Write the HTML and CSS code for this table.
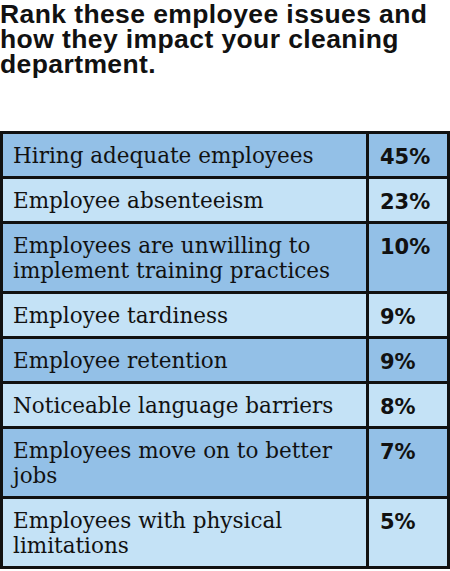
FILE: index.html
```html
<!DOCTYPE html>
<html lang="en">
<head>
    <meta charset="UTF-8">
    <title>Employee issues</title>
    <link rel="stylesheet" href="styles.css">
</head>
<body>

<div class="survey">
    <h1 class="title">Rank these employee issues and<br>how they impact your cleaning<br>department.</h1>

    <table class="results">
        <tr class="dark">
            <td class="issue">Hiring adequate employees</td>
            <td class="pct">45%</td>
        </tr>
        <tr class="light">
            <td class="issue">Employee absenteeism</td>
            <td class="pct">23%</td>
        </tr>
        <tr class="dark tall">
            <td class="issue">Employees are unwilling to<br>implement training practices</td>
            <td class="pct">10%</td>
        </tr>
        <tr class="light">
            <td class="issue">Employee tardiness</td>
            <td class="pct">9%</td>
        </tr>
        <tr class="dark">
            <td class="issue">Employee retention</td>
            <td class="pct">9%</td>
        </tr>
        <tr class="light">
            <td class="issue">Noticeable language barriers</td>
            <td class="pct">8%</td>
        </tr>
        <tr class="dark tall">
            <td class="issue">Employees move on to better<br>jobs</td>
            <td class="pct">7%</td>
        </tr>
        <tr class="light tall">
            <td class="issue">Employees with physical<br>limitations</td>
            <td class="pct">5%</td>
        </tr>
    </table>
</div>

</body>
</html>
```

FILE: styles.css
```css
body {
    margin: 0;
    background-color: #ffffff;
    color: #111;
}
.survey {
    width: 450px;
}
.title {
    font-family: "Liberation Sans", Arial, sans-serif;
    font-weight: bold;
    font-size: 26.5px;
    line-height: 25px;
    letter-spacing: 0.4px;
    margin: 0;
    padding-top: 2px;
    height: 129px;
    white-space: nowrap;
}
.results {
    width: 450px;
    border-collapse: collapse;
    border: 3px solid #111;
}
.results td {
    border: 3px solid #111;
    vertical-align: top;
}
.dark {
    background-color: #93c0e7;
}
.light {
    background-color: #c4e2f6;
}
.issue {
    font-family: "DejaVu Serif", serif;
    font-size: 21.5px;
    line-height: 25px;
    padding: 9px 0 8px 10px;
    height: 25px;
    width: 353px;
    white-space: nowrap;
}
.tall .issue {
    height: 50px;
}
.pct {
    font-family: "DejaVu Sans", sans-serif;
    font-weight: bold;
    font-size: 21px;
    padding: 11px 0 0 11px;
}
```
